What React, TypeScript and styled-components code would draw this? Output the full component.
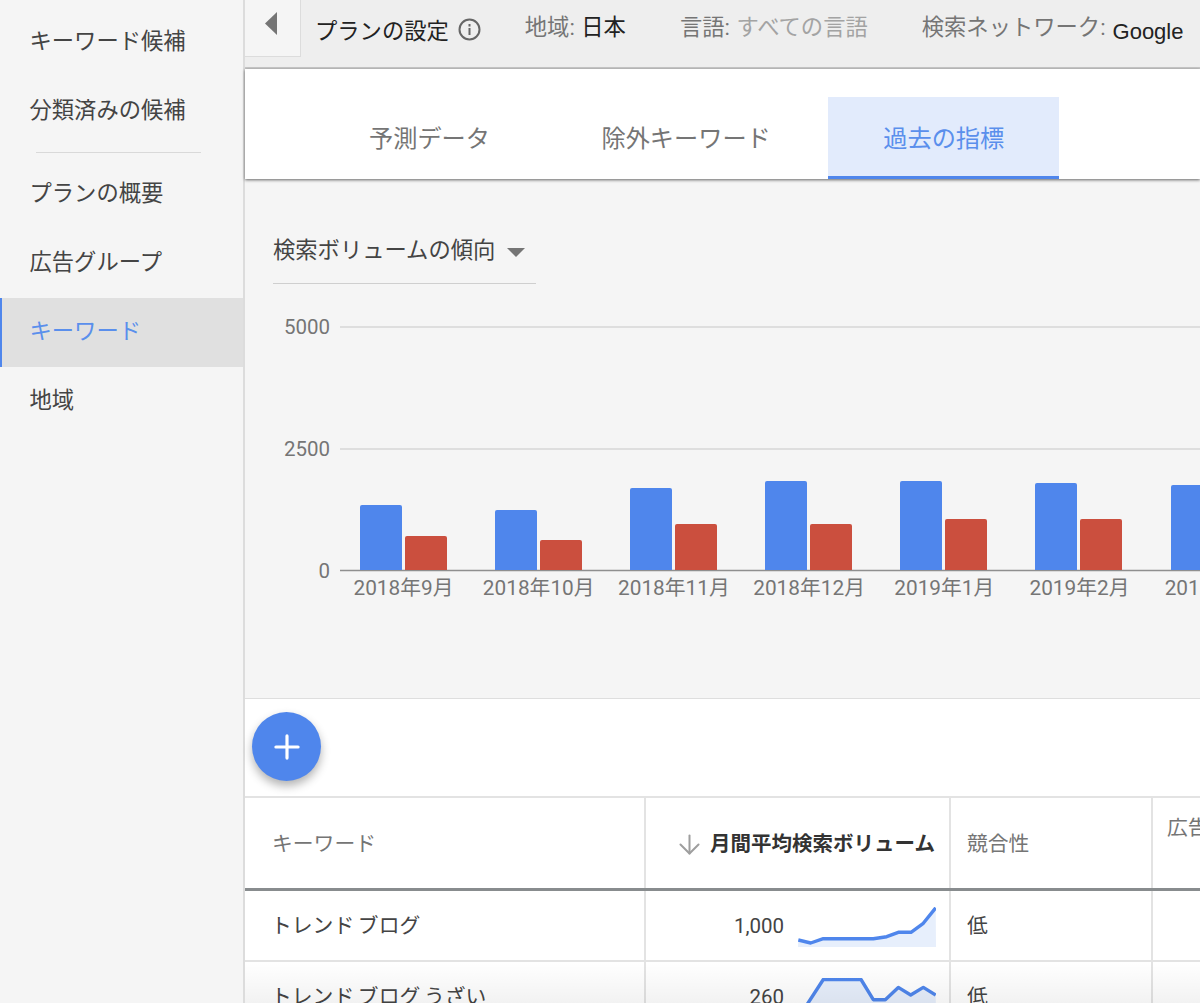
import React from "react";
import styled, { createGlobalStyle } from "styled-components";
import { ArrowDown, Plus } from "lucide-react";

const Global = createGlobalStyle`
  html, body { margin: 0; padding: 0; height: 100%; background: #f5f5f5; }
  body { font-family: Roboto, "Noto Sans CJK JP", sans-serif; overflow: hidden; }
  * { box-sizing: border-box; }
`;

const Page = styled.div`
  display: flex;
  width: 1200px;
  height: 1003px;
  overflow: hidden;
`;

const Sidebar = styled.nav`
  flex: none;
  width: 243px;
  padding-top: 8px;
  background: #f5f5f5;
  display: flex;
  flex-direction: column;
`;

const NavItem = styled.div<{ $active?: boolean }>`
  height: 69px;
  display: flex;
  align-items: center;
  padding: 0 0 4px ${(p) => (p.$active ? 27.5 : 29.5)}px;
  font-size: 22.3px;
  line-height: 30px;
  color: ${(p) => (p.$active ? "#5a8fec" : "#444")};
  background: ${(p) => (p.$active ? "#e0e0e0" : "transparent")};
  border-left: ${(p) => (p.$active ? "2px solid #4f86ec" : "none")};
`;

const NavDivider = styled.div`
  height: 1px;
  margin: 6px 42px 7px 36px;
  background: #d9d9d9;
`;

const Main = styled.main`
  flex: none;
  width: 957px;
  border-left: 2px solid #dcdcdc;
  display: flex;
  flex-direction: column;
  position: relative;
`;

const TopBar = styled.header`
  flex: none;
  height: 69px;
  display: flex;
  background: #eeeeee;
  border-bottom: 2px solid #c9c9c9;
  white-space: nowrap;
`;

const BackButton = styled.div`
  flex: none;
  width: 56px;
  height: 57px;
  padding: 12px 0 0 20px;
  background: #f5f5f5;
  border-right: 1px solid #dcdcdc;
  border-bottom: 1px solid #dcdcdc;
`;

const PlanTitle = styled.div`
  display: flex;
  align-items: center;
  gap: 9px;
  height: 30px;
  margin: 14px 0 0 14px;
  font-size: 22.3px;
  color: #222;
`;

const Setting = styled.div<{ $left: number }>`
  display: flex;
  align-items: flex-start;
  height: 30px;
  margin: 12px 0 0 ${(p) => p.$left}px;
  font-size: 22.3px;
  line-height: 30px;
  color: #757575;
`;

const SettingValue = styled.span<{ $muted?: boolean; $latin?: boolean }>`
  margin-left: ${(p) => (p.$latin ? 7 : 6.5)}px;
  color: ${(p) => (p.$muted ? "#a3a3a3" : "#222")};
  ${(p) => p.$latin && `font-family: "Liberation Sans", sans-serif; font-size: 22px; position: relative; top: 5px;`}
`;

const Tabs = styled.div`
  flex: none;
  height: 110px;
  display: flex;
  align-items: flex-end;
  gap: 3.5px;
  padding-left: 70px;
  background: #fff;
  box-shadow: 0 1px 3px rgba(0, 0, 0, 0.6);
  position: relative;
`;

const Tab = styled.div<{ $active?: boolean }>`
  height: 82px;
  padding: 0 ${(p) => (p.$active ? 55 : 54)}px;
  display: flex;
  align-items: center;
  font-size: 24.2px;
  color: ${(p) => (p.$active ? "#5a8fec" : "#757575")};
  background: ${(p) => (p.$active ? "#e2ebfc" : "transparent")};
  border-bottom: 3px solid ${(p) => (p.$active ? "#4f86ec" : "transparent")};
`;

const ChartSection = styled.section`
  flex: none;
  height: 520px;
  padding-top: 54px;
  background: #f5f5f5;
  border-bottom: 1px solid #dedede;
`;

const Dropdown = styled.div`
  width: 263px;
  height: 51px;
  margin-left: 28px;
  display: flex;
  align-items: flex-start;
  gap: 12px;
  font-size: 22.3px;
  line-height: 34px;
  color: #444;
  border-bottom: 1px solid #cfcfcf;
`;

const Caret = styled.span`
  width: 0;
  height: 0;
  margin-top: 15px;
  border-left: 9px solid transparent;
  border-right: 9px solid transparent;
  border-top: 9px solid #757575;
`;

const ChartSvg = styled.svg`
  display: block;
  margin-top: 16px;
`;

const AxisLabel = styled.text`
  font-family: Roboto, "Noto Sans CJK JP", sans-serif;
  font-size: 20.5px;
  fill: #757575;
`;

const MonthLabel = styled(AxisLabel)`
  font-size: 20.8px;
`;

const Toolbar = styled.div`
  flex: none;
  height: 99px;
  padding: 13px 0 0 7px;
  background: #fff;
  border-bottom: 2px solid #e3e3e3;
`;

const Fab = styled.div`
  width: 69px;
  height: 69px;
  border-radius: 50%;
  background: #4f86ec;
  color: #fff;
  display: flex;
  align-items: center;
  justify-content: center;
  box-shadow: 0 5px 10px rgba(0, 0, 0, 0.3);
`;

const Table = styled.div`
  flex: 1;
  min-height: 0;
  background: #fff;
  overflow: hidden;
`;

const TableRow = styled.div<{ $head?: boolean }>`
  display: grid;
  grid-template-columns: 401px 305px 202px 47px;
  height: ${(p) => (p.$head ? 93 : 71)}px;
  border-bottom: ${(p) => (p.$head ? "3px solid #888c8e" : "2px solid #e3e3e3")};
`;

const Cell = styled.div<{ $end?: boolean; $muted?: boolean; $left?: number }>`
  display: flex;
  align-items: center;
  justify-content: ${(p) => (p.$end ? "flex-end" : "flex-start")};
  padding: 0 ${(p) => (p.$end ? 14 : 0)}px 0 ${(p) => p.$left ?? 16}px;
  font-size: 20.8px;
  line-height: 28px;
  white-space: nowrap;
  overflow: hidden;
  color: ${(p) => (p.$muted ? "#757575" : "#444")};
  border-right: 2px solid #e3e3e3;

  &:last-child {
    border-right: 0;
  }
`;

const HeadCell = styled(Cell)`
  padding-top: 2px;
`;

const TopCell = styled(Cell)`
  align-items: flex-start;
  padding-top: 16px;
`;

const KeywordCell = styled(Cell)`
  padding-left: 26px;
  word-spacing: -1.5px;
`;

const SortLabel = styled.span`
  margin-left: 5px;
  font-size: 20.5px;
  font-weight: 700;
  color: #333;
`;

const Amount = styled.span`
  margin-right: 14px;
  font-family: Roboto, sans-serif;
  font-size: 20.5px;
`;

const SparkSvg = styled.svg`
  flex: none;
  margin: 3px -1px 0 0;
`;

const BottomFade = styled.div`
  position: absolute;
  left: 0;
  right: 0;
  bottom: 0;
  height: 41px;
  background: linear-gradient(rgba(0, 0, 0, 0), rgba(0, 0, 0, 0.05));
  pointer-events: none;
`;

const INK = "#4f86ec";
const months = ["2018年9月", "2018年10月", "2018年11月", "2018年12月", "2019年1月", "2019年2月", "2019年3月"];
const blueTops = [505, 510, 488, 481, 481, 483, 485];
const redTops = [536, 540, 524, 524, 519, 519, 522];
const X0 = 245;
const Y0 = 300;

function bar(x: number, top: number, w: number) {
  const l = x - X0;
  const t = top - Y0;
  const b = 570 - Y0;
  return `M${l} ${b}V${t + 2}q0-2 2-2H${l + w - 2}q2 0 2 2V${b}Z`;
}

function Chart() {
  const lines = [
    { y: 327, label: "5000", color: "#d6d6d6" },
    { y: 449, label: "2500", color: "#d6d6d6" },
    { y: 570.5, label: "0", color: "#8f8f8f" },
  ];
  return (
    <ChartSvg width={955} height={320} viewBox="0 0 955 320">
      {lines.map((l) => (
        <g key={l.label}>
          <line x1={95} x2={955} y1={l.y - Y0} y2={l.y - Y0} stroke={l.color} strokeWidth={1.5} />
          <AxisLabel x={85} y={l.y - Y0 + 7} textAnchor="end">
            {l.label}
          </AxisLabel>
        </g>
      ))}
      {months.map((m, i) => {
        const x = 360 + Math.floor(i * 135.17);
        return (
          <g key={m}>
            <path d={bar(x, blueTops[i], 42)} fill={INK} />
            {i < 6 && <path d={bar(x + 45, redTops[i], 42)} fill="#cb4f3e" />}
            <MonthLabel x={403.5 + i * 135.2 - X0} y={595 - Y0} textAnchor="middle">
              {m}
            </MonthLabel>
          </g>
        );
      })}
    </ChartSvg>
  );
}

function Spark({ points, height }: { points: string; height: number }) {
  return (
    <SparkSvg width={138} height={height} viewBox={`0 0 138 ${height}`}>
      <polygon points={`0,${height} ${points} 138,${height}`} fill="#e7effc" />
      <polyline points={points} fill="none" stroke={INK} strokeWidth={3.4} strokeLinejoin="round" />
    </SparkSvg>
  );
}

export default function App() {
  return (
    <Page>
      <Global />
      <Sidebar>
        <NavItem>キーワード候補</NavItem>
        <NavItem>分類済みの候補</NavItem>
        <NavDivider />
        <NavItem>プランの概要</NavItem>
        <NavItem>広告グループ</NavItem>
        <NavItem $active>キーワード</NavItem>
        <NavItem>地域</NavItem>
      </Sidebar>
      <Main>
        <TopBar>
          <BackButton>
            <svg width="12" height="23" viewBox="0 0 12 23">
              <path d="M12 0V23L0 11.5Z" fill="#757575" />
            </svg>
          </BackButton>
          <PlanTitle>
            プランの設定
            <svg width="23" height="23" viewBox="0 0 23 23" fill="none" stroke="#666" strokeWidth="2">
              <circle cx="11.5" cy="11.5" r="10" />
              <path d="M11.5 10v7M11.5 6v2.4" />
            </svg>
          </PlanTitle>
          <Setting $left={44}>
            地域:<SettingValue>日本</SettingValue>
          </Setting>
          <Setting $left={54}>
            言語:<SettingValue $muted>すべての言語</SettingValue>
          </Setting>
          <Setting $left={54}>
            検索ネットワーク:<SettingValue $latin>Google</SettingValue>
          </Setting>
        </TopBar>
        <Tabs>
          <Tab>予測データ</Tab>
          <Tab>除外キーワード</Tab>
          <Tab $active>過去の指標</Tab>
        </Tabs>
        <ChartSection>
          <Dropdown>
            検索ボリュームの傾向
            <Caret />
          </Dropdown>
          <Chart />
        </ChartSection>
        <Toolbar>
          <Fab>
            <Plus size={38} strokeWidth={2} />
          </Fab>
        </Toolbar>
        <Table>
          <TableRow $head>
            <HeadCell $muted $left={27}>キーワード</HeadCell>
            <HeadCell $end $left={0}>
              <ArrowDown size={31} strokeWidth={1.55} color="#9e9e9e" />
              <SortLabel>月間平均検索ボリューム</SortLabel>
            </HeadCell>
            <HeadCell $muted>競合性</HeadCell>
            <TopCell $muted $left={14}>広告のインプレッション</TopCell>
          </TableRow>
          <TableRow>
            <KeywordCell>トレンド ブログ</KeywordCell>
            <Cell $end $left={0}>
              <Amount>1,000</Amount>
              <Spark height={40} points="0.3,33 12.7,36 25.3,31.7 75.3,31.7 88.7,29.7 100.3,25.3 113,25.3 125.3,16.3 137.7,0.8" />
            </Cell>
            <Cell>低</Cell>
            <Cell />
          </TableRow>
          <TableRow>
            <KeywordCell>トレンド ブログ うざい</KeywordCell>
            <Cell $end $left={0}>
              <Amount>260</Amount>
              <Spark height={40} points="0.3,40 25.3,1.5 63,1.5 75.3,21.7 87.3,21.7 100.3,9.4 112.7,17 125.3,9.4 137.7,17" />
            </Cell>
            <Cell>低</Cell>
            <Cell />
          </TableRow>
        </Table>
        <BottomFade />
      </Main>
    </Page>
  );
}
